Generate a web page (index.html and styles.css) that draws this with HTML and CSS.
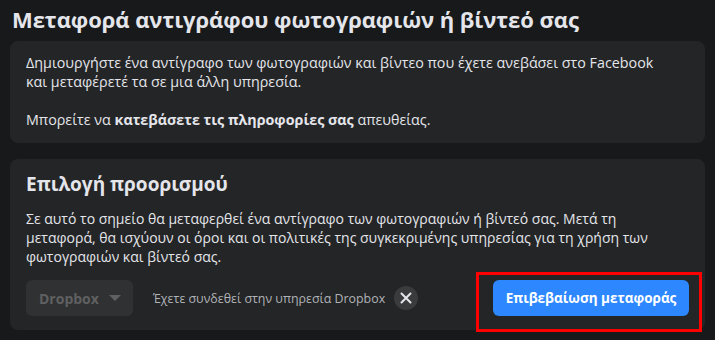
FILE: index.html
```html
<!DOCTYPE html>
<html lang="el">
<head>
    <meta charset="UTF-8">
    <meta name="viewport" content="width=device-width, initial-scale=1.0">
    <title>Μεταφορά αντιγράφου</title>
    <link rel="stylesheet" href="styles.css">
</head>
<body>
    <h1 class="page-title">Μεταφορά αντιγράφου φωτογραφιών ή βίντεό σας</h1>

    <!-- Intro -->
    <div class="card intro">
        <p>Δημιουργήστε ένα αντίγραφο των φωτογραφιών και βίντεο που έχετε ανεβάσει στο Facebook<br>και μεταφέρετέ τα σε μια άλλη υπηρεσία.</p>
        <p>Μπορείτε να <b>κατεβάσετε τις πληροφορίες σας</b> απευθείας.</p>
    </div>

    <!-- Destination -->
    <div class="card">
        <h2 class="card-title">Επιλογή προορισμού</h2>
        <p>Σε αυτό το σημείο θα μεταφερθεί ένα αντίγραφο των φωτογραφιών ή βίντεό σας. Μετά τη μεταφορά, θα ισχύουν οι όροι και οι πολιτικές της συγκεκριμένης υπηρεσίας για τη χρήση των φωτογραφιών και βίντεό σας.</p>
        <div class="actions">
            <button class="dropdown" disabled>Dropbox <span class="caret"></span></button>
            <span class="connected">Έχετε συνδεθεί στην υπηρεσία Dropbox</span>
            <button class="close">
                <svg width="12" height="12" viewBox="0 0 12 12"><path d="M1.5 1.5 10.5 10.5M10.5 1.5 1.5 10.5" stroke="#e4e6eb" stroke-width="2" stroke-linecap="round"/></svg>
            </button>
            <div class="confirm-wrap">
                <button class="confirm">Επιβεβαίωση μεταφοράς</button>
                <div class="highlight"></div>
            </div>
        </div>
    </div>
</body>
</html>
```

FILE: styles.css
```css
body {
    margin: 0;
    padding: 0 10px;
    background-color: #18191a;
    color: #e4e6eb;
    font-family: "Open Sans", "Noto Sans", sans-serif;
}

.page-title {
    margin: 0;
    padding: 4px 2px 0;
    height: 37px;
    font-size: 22px;
    font-weight: 700;
    line-height: 30px;
    letter-spacing: -0.05px;
}

.card {
    background-color: #242526;
    border-radius: 8px;
    padding: 12px 16px 14px;
    margin-bottom: 16px;
}

.card p {
    margin: 0;
    font-size: 14px;
    line-height: 19px;
}

.intro p {
    font-size: 14.3px;
}

.card p + p {
    margin-top: 19px;
}

.card-title {
    margin: 0 0 12px;
    font-size: 19px;
    font-weight: 700;
    line-height: 26px;
}

.actions {
    display: flex;
    align-items: center;
    margin-top: 14px;
}

.dropdown {
    width: 107px;
    height: 36px;
    padding: 0 0 0 13px;
    border: none;
    border-radius: 6px;
    background-color: #303132;
    color: #5f6061;
    font-family: inherit;
    font-size: 14px;
    font-weight: 700;
    display: flex;
    align-items: center;
    gap: 10px;
}

.caret {
    width: 0;
    height: 0;
    border-left: 6px solid transparent;
    border-right: 6px solid transparent;
    border-top: 6px solid #5f6061;
}

.connected {
    margin-left: 20px;
    font-size: 12.4px;
    color: #b0b3b8;
}

.close {
    width: 24px;
    height: 24px;
    margin-left: 9px;
    padding: 0;
    border: none;
    border-radius: 50%;
    background-color: #3a3b3c;
    display: flex;
    align-items: center;
    justify-content: center;
}

.confirm-wrap {
    position: relative;
    margin-left: auto;
}

.confirm {
    width: 196px;
    height: 36px;
    border: none;
    border-radius: 6px;
    background-color: #2d88ff;
    color: #fff;
    font-family: inherit;
    font-size: 13.5px;
    font-weight: 700;
}

.highlight {
    position: absolute;
    left: -17px;
    right: -13px;
    top: -8px;
    bottom: -16px;
    border: 3px solid #ff0000;
}
```
